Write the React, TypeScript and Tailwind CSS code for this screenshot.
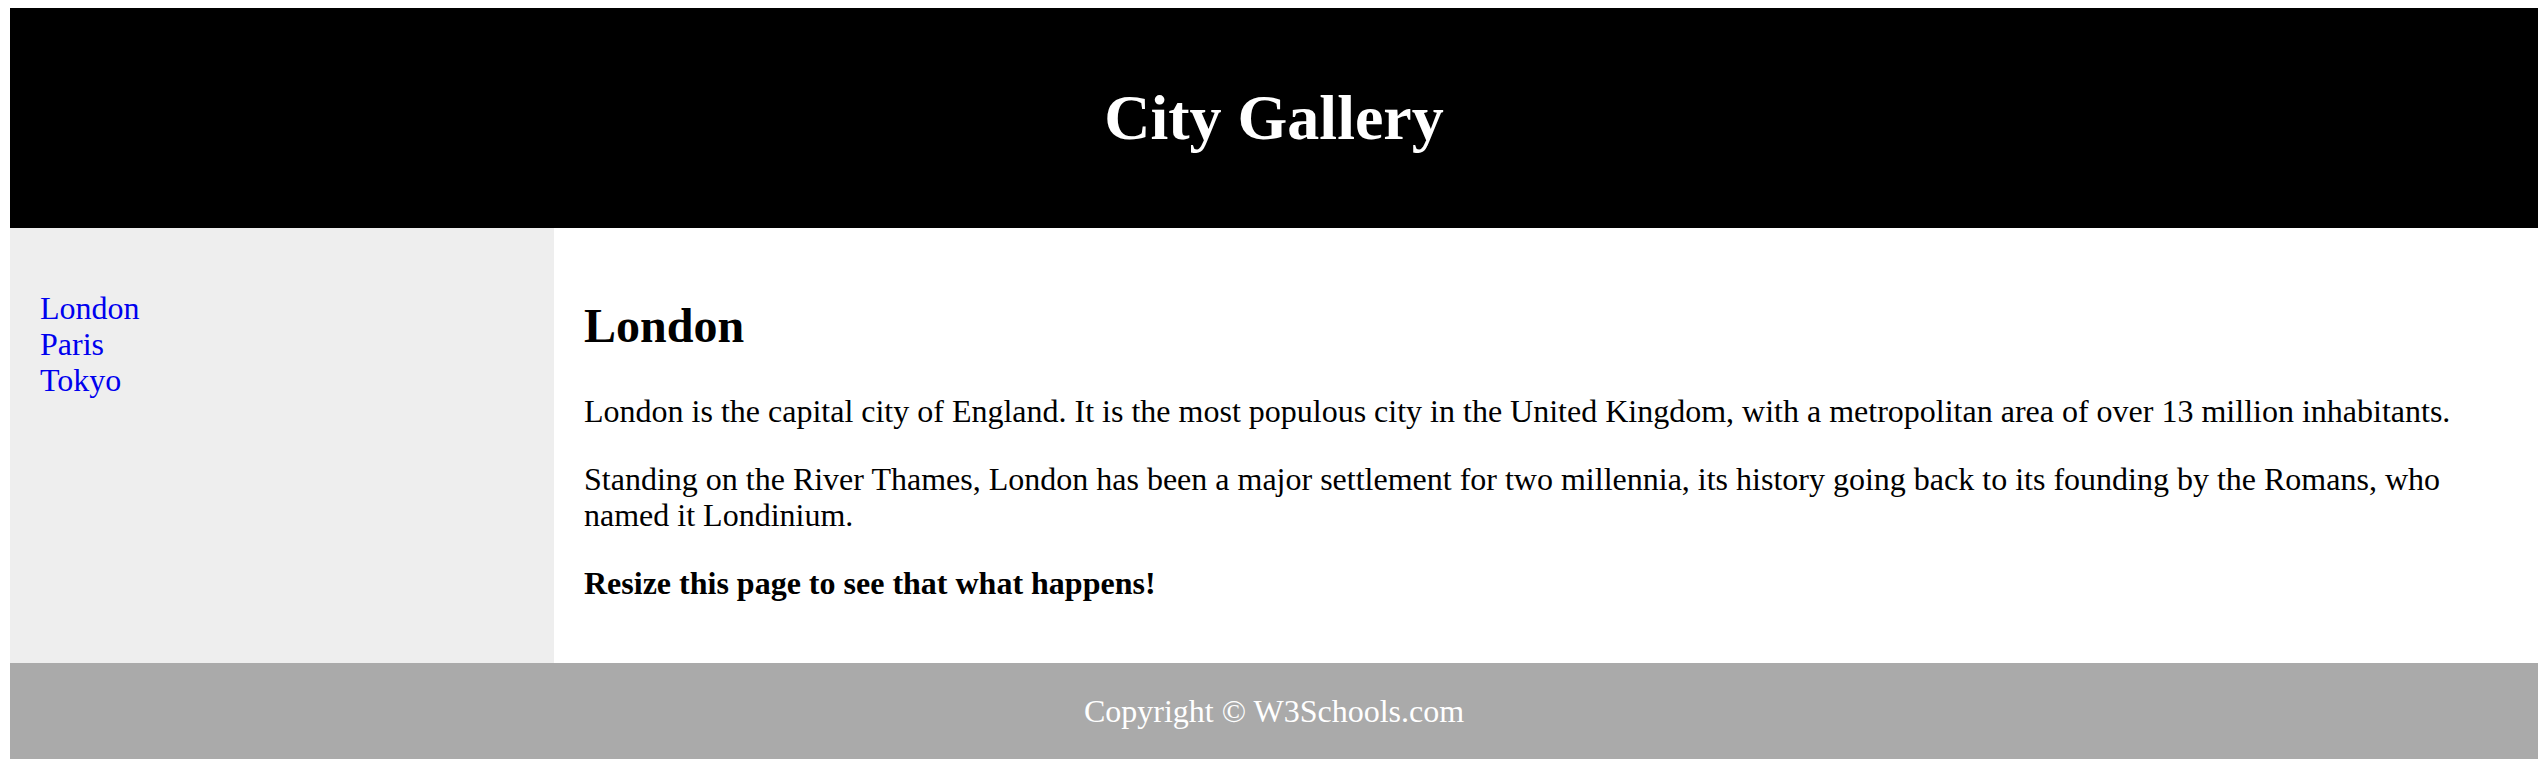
export default function App() {
  const cities = ['London', 'Paris', 'Tokyo']

  return (
    <div className="bg-white min-h-[774px] pt-[8px] px-[10px] font-['Liberation_Serif','Times_New_Roman',serif] text-[32px] leading-[36px] text-black">
      {/* Header */}
      <header className="bg-black text-white text-center py-[30px]">
        <h1 className="text-[64px] leading-[73.5px] font-bold my-[43px]">City Gallery</h1>
      </header>

      {/* Nav + article */}
      <section className="flex">
        <nav className="w-[544px] shrink-0 bg-[#eeeeee] p-[30px]">
          <ul className="my-[32px]">
            {cities.map((city) => (
              <li key={city}>
                <a href="#" className="text-[#0000ee]">
                  {city}
                </a>
              </li>
            ))}
          </ul>
        </nav>

        <article className="flex-1 p-[30px]">
          <h2 className="text-[48px] leading-[55px] font-bold mt-[40px] mb-[40px]">London</h2>
          <p className="mb-[32px]">
            London is the capital city of England. It is the most populous city in the United Kingdom, with a
            metropolitan area of over 13 million inhabitants.
          </p>
          <p className="mb-[32px]">
            Standing on the River Thames, London has been a major settlement for two millennia, its history going
            back to its founding by the Romans, who named it Londinium.
          </p>
          <p className="font-bold mb-[32px]">Resize this page to see that what happens!</p>
        </article>
      </section>

      {/* Footer */}
      <footer className="bg-[#aaaaaa] text-white text-center py-[30px]">
        <p>Copyright © W3Schools.com</p>
      </footer>
    </div>
  )
}
